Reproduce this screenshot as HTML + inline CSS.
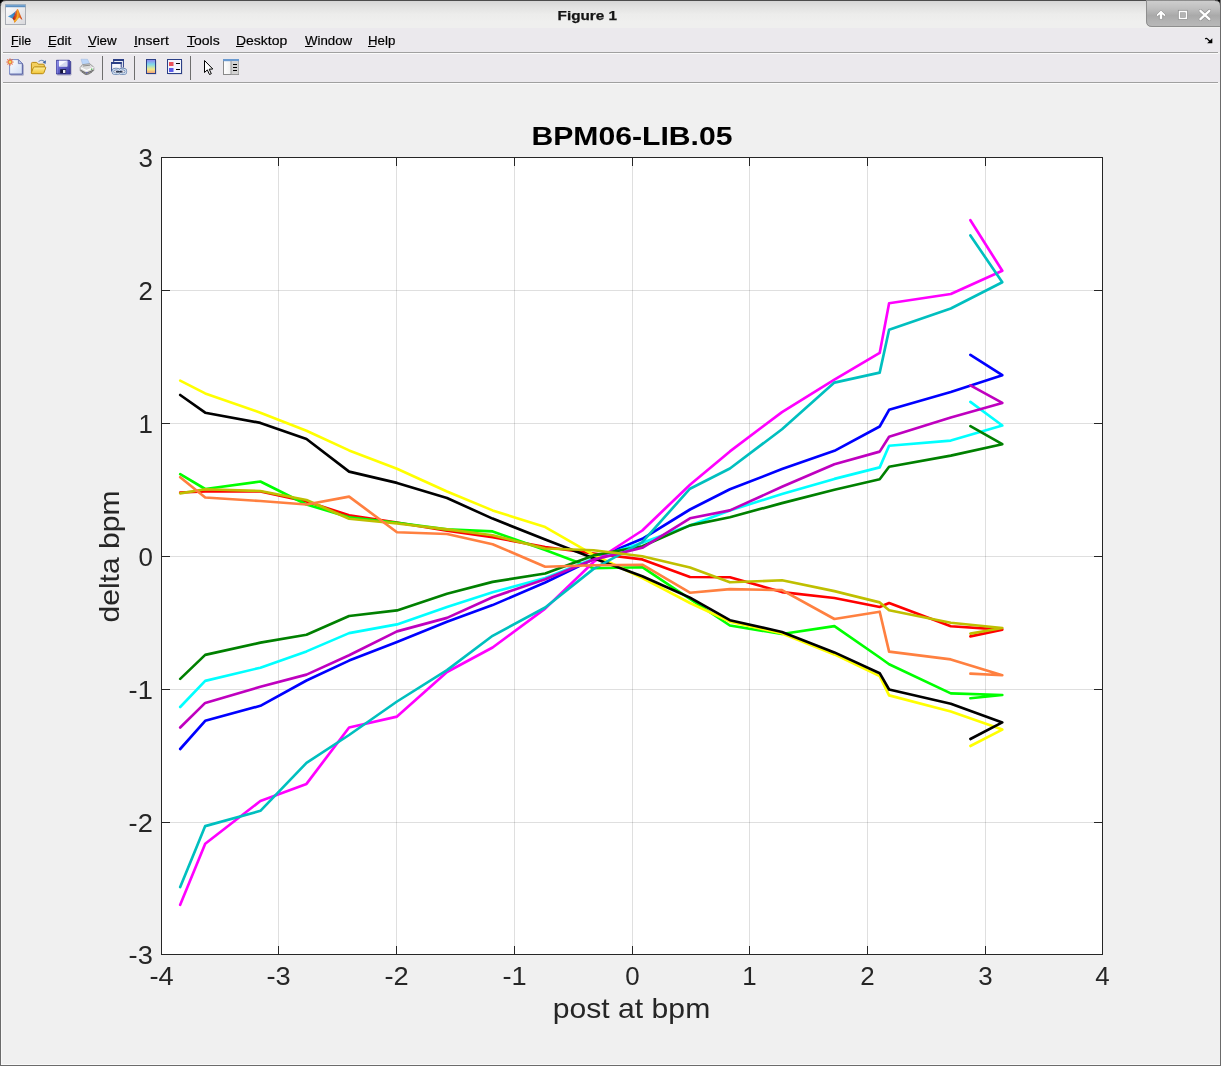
<!DOCTYPE html>
<html><head><meta charset="utf-8"><title>Figure 1</title>
<style>
html,body{margin:0;padding:0;}
body{width:1221px;height:1066px;overflow:hidden;background:#f0f0f0;font-family:"Liberation Sans",sans-serif;position:relative;}
.tk{font-family:"Liberation Sans",sans-serif;font-size:25.4px;fill:#262626;}
.lbl{font-family:"Liberation Sans",sans-serif;font-size:28px;fill:#262626;}
.ttl{font-family:"Liberation Sans",sans-serif;font-size:26.5px;font-weight:bold;fill:#000;}
#win{position:absolute;left:0;top:0;width:1221px;height:1066px;box-sizing:border-box;}
svg,#title{will-change:transform;}
#titlebar{position:absolute;left:0;top:0;width:1221px;height:28px;background:linear-gradient(#4c4c4c 0,#4c4c4c 1px,#d6d6d6 1px,#e2e2e1 7px,#ececeb 14px,#efefee 22px,#efefee 28px);}
#title{position:absolute;left:0;width:1175px;top:7px;text-align:center;font-weight:bold;font-size:13.5px;letter-spacing:1.15px;color:#111;line-height:16px;}
#menubar{position:absolute;left:1px;top:28px;width:1219px;height:24px;background:#ebe9ed;}
#toolbar{position:absolute;left:1px;top:54px;width:1219px;height:28px;background:#ebe9ed;}
.sep{position:absolute;left:3px;width:1215px;height:1px;}
.mi{position:absolute;top:33px;font-size:13.4px;color:#000;line-height:16px;white-space:nowrap;}
.mi u{text-decoration:none;border-bottom:1px solid #000;padding-bottom:0px;}
.bl{position:absolute;background:#6b6b6b;}
.tsep{position:absolute;top:56px;width:1px;height:24px;background:#777;}
</style></head><body>
<div id="win">
<div id="titlebar"></div>
<svg style="position:absolute;left:540px;top:0" width="100" height="28"><text x="17.600" y="19.700" font-family="Liberation Sans, sans-serif" font-weight="bold" font-size="13.300" fill="#141414" stroke="#141414" stroke-width="0.250" textLength="59.400" lengthAdjust="spacingAndGlyphs">Figure 1</text></svg>
<div id="menubar"></div>
<div class="sep" style="top:52px;background:#a0a0a0"></div>
<div class="sep" style="top:53px;background:#fbfbfb"></div>
<div id="toolbar"></div>
<div class="sep" style="top:82px;background:#a0a0a0"></div>
<div class="sep" style="top:83px;background:#fbfbfb"></div>
<svg class="mi" style="left:11.2px;top:30px" width="22" height="20"><text x="0" y="15.2" textLength="20.1" lengthAdjust="spacingAndGlyphs" font-size="13.2" font-family="Liberation Sans, sans-serif" fill="#000" stroke="#000" stroke-width="0.200">File</text><rect x="0" y="16" width="7.6" height="1" fill="#000"/></svg>
<svg class="mi" style="left:47.8px;top:30px" width="25" height="20"><text x="0" y="15.2" textLength="23.4" lengthAdjust="spacingAndGlyphs" font-size="13.2" font-family="Liberation Sans, sans-serif" fill="#000" stroke="#000" stroke-width="0.200">Edit</text><rect x="0" y="16" width="7.6" height="1" fill="#000"/></svg>
<svg class="mi" style="left:88.4px;top:30px" width="31" height="20"><text x="0" y="15.2" textLength="28.6" lengthAdjust="spacingAndGlyphs" font-size="13.2" font-family="Liberation Sans, sans-serif" fill="#000" stroke="#000" stroke-width="0.200">View</text><rect x="0" y="16" width="7.6" height="1" fill="#000"/></svg>
<svg class="mi" style="left:134.2px;top:30px" width="37" height="20"><text x="0" y="15.2" textLength="34.8" lengthAdjust="spacingAndGlyphs" font-size="13.2" font-family="Liberation Sans, sans-serif" fill="#000" stroke="#000" stroke-width="0.200">Insert</text><rect x="0" y="16" width="3.6" height="1" fill="#000"/></svg>
<svg class="mi" style="left:186.8px;top:30px" width="35" height="20"><text x="0" y="15.2" textLength="32.7" lengthAdjust="spacingAndGlyphs" font-size="13.2" font-family="Liberation Sans, sans-serif" fill="#000" stroke="#000" stroke-width="0.200">Tools</text><rect x="0" y="16" width="7.6" height="1" fill="#000"/></svg>
<svg class="mi" style="left:236.0px;top:30px" width="53" height="20"><text x="0" y="15.2" textLength="51.2" lengthAdjust="spacingAndGlyphs" font-size="13.2" font-family="Liberation Sans, sans-serif" fill="#000" stroke="#000" stroke-width="0.200">Desktop</text><rect x="0" y="16" width="7.6" height="1" fill="#000"/></svg>
<svg class="mi" style="left:304.8px;top:30px" width="49" height="20"><text x="0" y="15.2" textLength="47.2" lengthAdjust="spacingAndGlyphs" font-size="13.2" font-family="Liberation Sans, sans-serif" fill="#000" stroke="#000" stroke-width="0.200">Window</text><rect x="0" y="16" width="7.6" height="1" fill="#000"/></svg>
<svg class="mi" style="left:367.7px;top:30px" width="29" height="20"><text x="0" y="15.2" textLength="27.3" lengthAdjust="spacingAndGlyphs" font-size="13.2" font-family="Liberation Sans, sans-serif" fill="#000" stroke="#000" stroke-width="0.200">Help</text><rect x="0" y="16" width="7.6" height="1" fill="#000"/></svg>


<!-- matlab window icon -->
<svg style="position:absolute;left:5px;top:4px" width="22" height="22" viewBox="0 0 22 22">
 <defs><linearGradient id="ibg" x1="0" y1="0" x2="1" y2="1"><stop offset="0" stop-color="#ffffff"/><stop offset="1" stop-color="#d9d9dc"/></linearGradient>
 <linearGradient id="ibar" x1="0" y1="0" x2="0" y2="1"><stop offset="0" stop-color="#86b4dc"/><stop offset="1" stop-color="#4d82b6"/></linearGradient>
 <linearGradient id="mlo" x1="0" y1="0" x2="1" y2="0"><stop offset="0" stop-color="#8e1c14"/><stop offset="0.3" stop-color="#d8461c"/><stop offset="0.55" stop-color="#f08a22"/><stop offset="0.8" stop-color="#e0601c"/><stop offset="1" stop-color="#b02a18"/></linearGradient>
 <linearGradient id="mbl" x1="0" y1="0" x2="1" y2="0"><stop offset="0" stop-color="#4fa0dc"/><stop offset="0.7" stop-color="#3a86c4"/><stop offset="1" stop-color="#5a4a78"/></linearGradient></defs>
 <rect x="0.5" y="0.5" width="20" height="20" fill="url(#ibg)" stroke="#a9adb4"/>
 <rect x="0.6" y="0.6" width="19.8" height="2.6" fill="url(#ibar)"/>
 <path d="M2.9 12.4 L6.5 10.6 L9.5 8.2 L11 6.8 L9.6 12.2 L7.4 14.4 Z" fill="url(#mbl)"/>
 <path d="M7.4 14.4 L9.4 11.5 L11.6 6 L12.4 5 L13.2 5.4 L14.8 9.5 L17.4 15.8 L16.2 15.3 L14.6 13.6 L13.2 14.4 L9.6 18.7 L8.6 16 Z" fill="url(#mlo)"/>
 <path d="M9.6 18.7 L8.9 16.4 L10.4 15.6 L12.2 12 L12.6 8 L13.4 11 L13.3 14.3 Z" fill="#f5b024"/>
 <path d="M12 6.6 L12.9 6 L13.6 9.6 L12.8 11.8 Z" fill="#f3a928" opacity="0.9"/>
</svg>
<!-- window buttons -->
<svg style="position:absolute;left:1145px;top:0" width="76" height="28" viewBox="0 0 76 28">
 <defs><linearGradient id="wb" x1="0" y1="0" x2="0" y2="1"><stop offset="0" stop-color="#606060"/><stop offset="0.045" stop-color="#cdcdcd"/><stop offset="0.3" stop-color="#c0c0c0"/><stop offset="0.58" stop-color="#a9a9a9"/><stop offset="0.8" stop-color="#b3b3b3"/><stop offset="1" stop-color="#b9b9b9"/></linearGradient></defs>
 <path d="M1 0 H76 V27 H7 Q1 27 1 21 Z" fill="url(#wb)"/>
 <path d="M1.5 1 V21 Q1.5 26.500 7 26.500 H75" fill="none" stroke="#8e8e8e" stroke-width="1"/>
 <path d="M16 10.100 L20.900 15 L19.300 16.500 L17.600 14.900 V19.400 H14.400 V14.900 L12.700 16.500 L11.100 15 Z" fill="#fff" stroke="#8c8c8c" stroke-width="0.7" stroke-linejoin="round"/>
 <rect x="33.300" y="10.300" width="9.200" height="9.200" fill="#fff" stroke="#8c8c8c" stroke-width="0.7"/>
 <rect x="35.300" y="12.700" width="5.200" height="4.800" fill="#b4b4b4" stroke="#9a9a9a" stroke-width="0.6"/>
 <path d="M55.400 10.800 L64.400 19.200 M64.400 10.800 L55.400 19.200" stroke="#8c8c8c" stroke-width="3.400" stroke-linecap="round"/>
 <path d="M55.400 10.800 L64.400 19.200 M64.400 10.800 L55.400 19.200" stroke="#fff" stroke-width="2.300" stroke-linecap="round"/>
</svg>
<!-- dock arrow -->
<svg style="position:absolute;left:1204px;top:36px" width="10" height="9" viewBox="0 0 10 9"><path d="M1.300 3.200 Q2.300 1.800 3.400 2.900 L6 5.500" stroke="#000" stroke-width="1.300" fill="none"/><path d="M8.300 2.200 V7.300 H3.200 Z" fill="#000"/></svg>
<!-- toolbar icons -->
<svg style="position:absolute;left:0;top:54px" width="260" height="28" viewBox="0 54 260 28">
 <defs>
  <linearGradient id="cb" x1="0" y1="0" x2="0" y2="1"><stop offset="0" stop-color="#8f7ff2"/><stop offset="0.35" stop-color="#7fd8ea"/><stop offset="0.7" stop-color="#f3ea86"/><stop offset="1" stop-color="#f09a7a"/></linearGradient>
  <linearGradient id="pg" x1="0" y1="0" x2="1" y2="1"><stop offset="0" stop-color="#ffffff"/><stop offset="1" stop-color="#cfdcf4"/></linearGradient>
  <linearGradient id="fo" x1="0" y1="0" x2="0" y2="1"><stop offset="0" stop-color="#fdf0a0"/><stop offset="1" stop-color="#f1c232"/></linearGradient>
  <linearGradient id="sv" x1="0" y1="0" x2="1" y2="1"><stop offset="0" stop-color="#8484e6"/><stop offset="1" stop-color="#34349c"/></linearGradient>
  <linearGradient id="pp" x1="0" y1="0" x2="1" y2="0"><stop offset="0" stop-color="#ffffff"/><stop offset="1" stop-color="#e0e0e0"/></linearGradient>
 </defs>
 <!-- new -->
 <path d="M10.500 75.200 H23.300 V64.500" fill="none" stroke="#8a8fb4" stroke-width="1" opacity="0.750"/>
 <path d="M9.600 59.600 H18.400 L22.400 63.600 V74.200 H9.600 Z" fill="url(#pg)" stroke="#6d7fc4" stroke-width="0.900"/>
 <path d="M18.400 59.600 V63.600 H22.400 Z" fill="#b9c6ee" stroke="#6670a8" stroke-width="0.800"/>
 <path d="M22.400 63.600 V74.200 H9.600" fill="none" stroke="#5d64a0" stroke-width="0.900"/>
 <g stroke="#e8683a" stroke-width="1.100" stroke-linecap="round"><path d="M10 58.800 V65.200 M6.800 62 H13.200 M7.700 59.700 L12.300 64.300 M12.300 59.700 L7.700 64.300" stroke-dasharray="0.900 4.600"/></g>
 <circle cx="10" cy="62" r="2.300" fill="#ee8048"/>
 <rect x="9" y="61" width="2.100" height="2.100" fill="#e6e05a"/>
 <!-- open -->
 <path d="M31.400 73 V63.600 Q31.400 62.400 32.600 62.400 H36.200 Q37 62.400 37.600 63.200 L38.300 64.200 H43.300 Q44.300 64.200 44.300 65.200 V67" fill="#f3cf5e" stroke="#b98a10" stroke-width="1" stroke-linejoin="round"/>
 <path d="M32 73.700 Q31 73.700 31.400 72.600 L33.300 67.800 Q33.700 66.900 34.700 66.900 H45 Q46.100 66.900 45.700 68 L43.900 72.800 Q43.500 73.700 42.500 73.700 Z" fill="url(#fo)" stroke="#b98a10" stroke-width="1" stroke-linejoin="round"/>
 <path d="M38.600 61.600 Q41.800 58.600 44.800 62.200" fill="none" stroke="#6e8cb8" stroke-width="1.100"/>
 <path d="M46 60.300 L45.600 63.900 L42.700 62.600 Z" fill="#3e64a4"/>
 <!-- save -->
 <path d="M57.300 75 H71 V61.500" fill="none" stroke="#7c7ca8" stroke-width="1" opacity="0.600"/>
 <path d="M56.500 60.300 H69.300 L70.300 61.300 V74 H56.500 Z" fill="url(#sv)" stroke="#30308c" stroke-width="0.900"/>
 <path d="M57.100 60.800 V73.500" stroke="#9a9af0" stroke-width="0.800"/>
 <rect x="58.900" y="60.600" width="8.400" height="5.900" fill="#f6f7ff"/>
 <path d="M58.900 66.500 L67.300 60.600 V66.500 Z" fill="#d4d9ee"/>
 <rect x="60.200" y="69.200" width="5.900" height="4.200" fill="#15153c"/>
 <rect x="63" y="70" width="2.400" height="3" fill="#ecedf6"/>
 <!-- print -->
 <path d="M81 59.200 L87.500 59.300 L89.800 64 L82.700 64.800 Z" fill="#bcd6fa" stroke="#9ab4dc" stroke-width="0.500"/>
 <path d="M80.200 67.500 L82.500 64.600 L89.800 63.800 L93.800 67.200 V70.500 L88.500 74.400 H85 L80.200 70.800 Z" fill="#dcdcdc" stroke="#8c8c8c" stroke-width="0.800" stroke-linejoin="round"/>
 <path d="M80.600 67.800 L86.500 70.600 L93.600 67.400" fill="none" stroke="#ffffff" stroke-width="1.100"/>
 <path d="M80.600 70.300 L86.200 73.300 L93.400 70.200" fill="none" stroke="#6e6e6e" stroke-width="1.200"/>
 <path d="M82 72 L86.200 74.600 L92 72" fill="none" stroke="#555" stroke-width="0.900" opacity="0.700"/>
 <path d="M83 66 L90 65.200" stroke="#777" stroke-width="0.800"/>
 <rect x="91" y="68.500" width="1.300" height="1.300" fill="#46b946"/>
 <rect x="86" y="72.300" width="1.500" height="0.900" fill="#5a5ad0"/>
 <!-- sep -->
 <rect x="102" y="56" width="1" height="24" fill="#6e6e6e"/>
 <!-- link -->
 <rect x="113.700" y="59.500" width="9.700" height="8.500" fill="#eef1f8" stroke="#2b3f86" stroke-width="1"/>
 <rect x="113.200" y="59" width="10.700" height="2" fill="#2b3f86"/>
 <rect x="111.600" y="62.500" width="9.600" height="8.500" fill="#f4f6fc" stroke="#2b3f86" stroke-width="1"/>
 <rect x="111.100" y="62" width="10.600" height="2" fill="#2b3f86"/>
 <rect x="112.600" y="67.500" width="14.500" height="7.500" fill="#ebe9ed" opacity="0.850"/>
 <g fill="none" stroke="#5b7aa8" stroke-width="2.300"><ellipse cx="116.100" cy="71.400" rx="3.300" ry="2.400"/><ellipse cx="122.700" cy="71.400" rx="3.300" ry="2.400"/></g>
 <g fill="none" stroke="#d4e2f2" stroke-width="1.100"><ellipse cx="116.100" cy="71.400" rx="3.300" ry="2.400"/><ellipse cx="122.700" cy="71.400" rx="3.300" ry="2.400"/></g>
 <path d="M116 71.800 H122.500" stroke="#10182c" stroke-width="1.200"/>
 <!-- sep -->
 <rect x="134" y="56" width="1" height="24" fill="#6e6e6e"/>
 <!-- colorbar -->
 <rect x="147.500" y="60.5" width="9" height="14" fill="#b8b8c8" opacity="0.8"/>
 <rect x="146.500" y="59.500" width="9" height="14" fill="url(#cb)" stroke="#2b3f86" stroke-width="1"/>
 <!-- legend -->
 <rect x="168.500" y="60.5" width="14" height="14" fill="#b8b8c8" opacity="0.8"/>
 <rect x="167.500" y="59.500" width="14" height="14" fill="#f2f5fc" stroke="#2b3f86" stroke-width="1"/>
 <rect x="169" y="62" width="4.500" height="4" fill="#e8525a"/>
 <rect x="169" y="68" width="4.500" height="4" fill="#5a5ae8"/>
 <rect x="176" y="63" width="4" height="1" fill="#000"/><rect x="176" y="69" width="4" height="1" fill="#000"/>
 <!-- sep -->
 <rect x="190" y="56" width="1" height="24" fill="#6e6e6e"/>
 <!-- cursor -->
 <path d="M204.500 60.500 V72.500 L207.300 69.900 L209.500 74.500 L211.300 73.700 L209.200 69.200 L212.800 69 Z" fill="#fff" stroke="#000" stroke-width="1" stroke-linejoin="miter"/>
 <!-- property panel -->
 <rect x="223.500" y="59.5" width="15" height="15" fill="url(#pp)" stroke="#8a8a8a" stroke-width="1"/>
 <rect x="223" y="59" width="16" height="2.2" fill="#6a9ad0"/>
 <rect x="231" y="61.2" width="7.500" height="13" fill="#d2d2d2"/>
 <rect x="230.500" y="61" width="1" height="13.500" fill="#9a9a9a"/>
 <rect x="233" y="64" width="4" height="1" fill="#000"/><rect x="233" y="67" width="4" height="1" fill="#000"/><rect x="233" y="70" width="4" height="1" fill="#000"/>
</svg>

<svg width="1221" height="982" viewBox="0 84 1221 982" style="position:absolute;left:0;top:84px">
<rect x="161" y="157" width="942" height="798" fill="#fff"/>
<path d="M278.5 157V955M396.5 157V955M514.5 157V955M632.5 157V955M749.5 157V955M867.5 157V955M985.5 157V955" stroke="#262626" stroke-opacity="0.15" stroke-width="1" fill="none" shape-rendering="crispEdges"/>
<path d="M161 290.5H1103M161 423.5H1103M161 556.5H1103M161 689.5H1103M161 822.5H1103" stroke="#262626" stroke-opacity="0.15" stroke-width="1" fill="none" shape-rendering="crispEdges"/>
<polyline points="180.2,492.5 205.2,491.5 260.4,491.5 306.5,501.5 349.1,515.3 397.0,522.5 447.0,530.8 492.6,537.3 545.2,547.0 593.6,553.5 642.3,559.4 690.0,577.0 729.9,577.3 782.0,592.1 834.4,598.0 879.7,607.0 889.1,603.0 950.8,626.2 1002.3,629.6 970.4,636.4" fill="none" stroke="#ff0000" stroke-width="2.65" stroke-linejoin="round" stroke-linecap="round"/>
<polyline points="180.2,474.1 205.2,489.0 260.4,481.5 306.5,504.5 349.1,517.2 397.0,522.8 447.0,529.4 492.6,531.4 545.2,550.1 593.6,568.2 642.3,567.2 690.0,599.0 729.9,625.5 782.0,634.0 834.4,626.1 879.7,657.5 889.1,664.3 950.8,693.4 1002.3,695.0 970.4,698.2" fill="none" stroke="#00ff00" stroke-width="2.65" stroke-linejoin="round" stroke-linecap="round"/>
<polyline points="180.2,749.0 205.2,720.8 260.4,705.8 306.5,680.5 349.1,660.6 397.0,642.0 447.0,621.8 492.6,605.1 545.2,582.5 593.6,559.1 642.3,538.8 690.0,509.5 729.9,489.3 782.0,469.1 834.4,450.8 879.7,426.5 889.1,409.8 950.8,392.0 1002.3,375.2 970.4,354.8" fill="none" stroke="#0000ff" stroke-width="2.65" stroke-linejoin="round" stroke-linecap="round"/>
<polyline points="180.2,707.0 205.2,680.9 260.4,667.7 306.5,651.4 349.1,633.1 397.0,624.4 447.0,607.0 492.6,592.3 545.2,578.0 593.6,558.8 642.3,542.8 690.0,525.4 729.9,510.4 782.0,494.1 834.4,478.9 879.7,467.4 889.1,445.7 950.8,440.6 1002.3,425.5 970.4,401.9" fill="none" stroke="#00ffff" stroke-width="2.65" stroke-linejoin="round" stroke-linecap="round"/>
<polyline points="180.2,904.8 205.2,843.8 260.4,801.0 306.5,783.9 349.1,727.5 397.0,716.6 447.0,672.0 492.6,647.5 545.2,608.6 593.6,562.0 642.3,530.5 690.0,484.8 729.9,451.4 782.0,412.1 834.4,379.7 879.7,352.9 889.1,303.2 950.8,294.0 1002.3,270.8 970.4,220.2" fill="none" stroke="#ff00ff" stroke-width="2.65" stroke-linejoin="round" stroke-linecap="round"/>
<polyline points="180.2,380.6 205.2,393.4 260.4,412.7 306.5,430.8 349.1,450.4 397.0,468.8 447.0,491.5 492.6,510.4 545.2,527.1 593.6,554.8 642.3,578.0 690.0,603.0 729.9,621.6 782.0,633.4 834.4,654.4 879.7,676.1 889.1,695.4 950.8,711.5 1002.3,729.6 970.4,746.0" fill="none" stroke="#ffff00" stroke-width="2.65" stroke-linejoin="round" stroke-linecap="round"/>
<polyline points="180.2,395.0 205.2,412.7 260.4,422.9 306.5,439.0 349.1,471.6 397.0,482.9 447.0,498.0 492.6,518.6 545.2,539.5 593.6,558.2 642.3,576.3 690.0,597.6 729.9,620.2 782.0,632.0 834.4,652.4 879.7,673.2 889.1,689.5 950.8,703.7 1002.3,722.4 970.4,739.0" fill="none" stroke="#000000" stroke-width="2.65" stroke-linejoin="round" stroke-linecap="round"/>
<polyline points="180.2,678.9 205.2,654.9 260.4,642.6 306.5,634.7 349.1,616.0 397.0,610.4 447.0,593.7 492.6,581.9 545.2,573.5 593.6,555.4 642.3,546.3 690.0,525.4 729.9,517.2 782.0,503.1 834.4,489.7 879.7,479.2 889.1,466.8 950.8,455.6 1002.3,444.2 970.4,426.1" fill="none" stroke="#008000" stroke-width="2.65" stroke-linejoin="round" stroke-linecap="round"/>
<polyline points="180.2,887.1 205.2,826.1 260.4,810.8 306.5,762.8 349.1,735.0 397.0,701.5 447.0,670.1 492.6,635.8 545.2,607.5 593.6,568.9 642.3,542.2 690.0,488.7 729.9,468.5 782.0,429.2 834.4,382.6 879.7,372.6 889.1,329.7 950.8,308.5 1002.3,282.2 970.4,235.4" fill="none" stroke="#00bfbf" stroke-width="2.65" stroke-linejoin="round" stroke-linecap="round"/>
<polyline points="180.2,727.5 205.2,702.9 260.4,686.8 306.5,674.6 349.1,655.3 397.0,631.4 447.0,617.9 492.6,597.2 545.2,579.2 593.6,559.6 642.3,547.8 690.0,518.3 729.9,510.4 782.0,486.8 834.4,464.2 879.7,451.6 889.1,436.7 950.8,417.6 1002.3,402.9 970.4,385.4" fill="none" stroke="#bf00bf" stroke-width="2.65" stroke-linejoin="round" stroke-linecap="round"/>
<polyline points="180.2,493.4 205.2,489.2 260.4,491.0 306.5,500.0 349.1,518.8 397.0,523.5 447.0,529.4 492.6,535.3 545.2,548.5 593.6,550.2 642.3,556.2 690.0,567.5 729.9,582.3 782.0,580.3 834.4,591.1 879.7,602.4 889.1,610.3 950.8,622.7 1002.3,628.0 970.4,633.6" fill="none" stroke="#bfbf00" stroke-width="2.65" stroke-linejoin="round" stroke-linecap="round"/>
<polyline points="180.2,477.2 205.2,497.5 260.4,501.0 306.5,504.5 349.1,496.6 397.0,532.3 447.0,534.0 492.6,544.2 545.2,566.7 593.6,565.3 642.3,564.7 690.0,592.7 729.9,589.1 782.0,590.1 834.4,619.0 879.7,611.7 889.1,651.6 950.8,659.4 1002.3,675.2 970.4,673.6" fill="none" stroke="#ff8040" stroke-width="2.65" stroke-linejoin="round" stroke-linecap="round"/>
<path d="M278.5 955v-9M278.5 157v9M396.5 955v-9M396.5 157v9M514.5 955v-9M514.5 157v9M632.5 955v-9M632.5 157v9M749.5 955v-9M749.5 157v9M867.5 955v-9M867.5 157v9M985.5 955v-9M985.5 157v9M161 290.5h9M1103 290.5h-9M161 423.5h9M1103 423.5h-9M161 556.5h9M1103 556.5h-9M161 689.5h9M1103 689.5h-9M161 822.5h9M1103 822.5h-9" stroke="#262626" stroke-width="1" fill="none" shape-rendering="crispEdges"/>
<rect x="161.5" y="157.5" width="941" height="797" fill="none" stroke="#262626" stroke-width="1" shape-rendering="crispEdges"/>
<text x="161.5" y="985.3" text-anchor="middle" class="tk" textLength="24.2" lengthAdjust="spacingAndGlyphs">-4</text>
<text x="278.5" y="985.3" text-anchor="middle" class="tk" textLength="24.2" lengthAdjust="spacingAndGlyphs">-3</text>
<text x="396.5" y="985.3" text-anchor="middle" class="tk" textLength="24.2" lengthAdjust="spacingAndGlyphs">-2</text>
<text x="514.5" y="985.3" text-anchor="middle" class="tk" textLength="24.2" lengthAdjust="spacingAndGlyphs">-1</text>
<text x="632.5" y="985.3" text-anchor="middle" class="tk" textLength="14.4" lengthAdjust="spacingAndGlyphs">0</text>
<text x="749.5" y="985.3" text-anchor="middle" class="tk" textLength="14.4" lengthAdjust="spacingAndGlyphs">1</text>
<text x="867.5" y="985.3" text-anchor="middle" class="tk" textLength="14.4" lengthAdjust="spacingAndGlyphs">2</text>
<text x="985.5" y="985.3" text-anchor="middle" class="tk" textLength="14.4" lengthAdjust="spacingAndGlyphs">3</text>
<text x="1102.5" y="985.3" text-anchor="middle" class="tk" textLength="14.4" lengthAdjust="spacingAndGlyphs">4</text>
<text x="152.8" y="166.6" text-anchor="end" class="tk" textLength="14.4" lengthAdjust="spacingAndGlyphs">3</text>
<text x="152.8" y="299.6" text-anchor="end" class="tk" textLength="14.4" lengthAdjust="spacingAndGlyphs">2</text>
<text x="152.8" y="432.6" text-anchor="end" class="tk" textLength="14.4" lengthAdjust="spacingAndGlyphs">1</text>
<text x="152.8" y="565.6" text-anchor="end" class="tk" textLength="14.4" lengthAdjust="spacingAndGlyphs">0</text>
<text x="152.8" y="698.6" text-anchor="end" class="tk" textLength="24.2" lengthAdjust="spacingAndGlyphs">-1</text>
<text x="152.8" y="831.6" text-anchor="end" class="tk" textLength="24.2" lengthAdjust="spacingAndGlyphs">-2</text>
<text x="152.8" y="963.6" text-anchor="end" class="tk" textLength="24.2" lengthAdjust="spacingAndGlyphs">-3</text>
<text x="632" y="145" text-anchor="middle" class="ttl" textLength="201" lengthAdjust="spacingAndGlyphs">BPM06-LIB.05</text>
<text x="631.5" y="1017.5" text-anchor="middle" class="lbl" textLength="157.5" lengthAdjust="spacingAndGlyphs">post at bpm</text>
<text transform="translate(119.0 556.5) rotate(-90)" text-anchor="middle" class="lbl" textLength="132" lengthAdjust="spacingAndGlyphs">delta bpm</text>
</svg>
<div class="bl" style="left:0;top:0;width:1px;height:1066px"></div>
<svg style="position:absolute;left:0;top:0" width="6" height="6"><path d="M0 0 H5 Q1 1 0 5 Z" fill="#000"/><path d="M0.500 6 Q0.500 0.500 6 0.500" fill="none" stroke="#4c4c4c" stroke-width="1"/></svg>
<svg style="position:absolute;left:1215px;top:0" width="6" height="6"><path d="M6 0 H1 Q5 1 6 5 Z" fill="#000"/><path d="M5.500 6 Q5.500 0.500 0 0.500" fill="none" stroke="#4c4c4c" stroke-width="1"/></svg>
<div class="bl" style="left:1220px;top:0;width:1px;height:1066px"></div>
<div class="bl" style="left:0;top:1065px;width:1221px;height:1px"></div>
<div style="position:absolute;left:1px;top:28px;width:1px;height:1037px;background:#f8f8f8"></div>
<div style="position:absolute;left:1px;top:1064px;width:1219px;height:1px;background:#fafafa"></div>
</div>
</body></html>
